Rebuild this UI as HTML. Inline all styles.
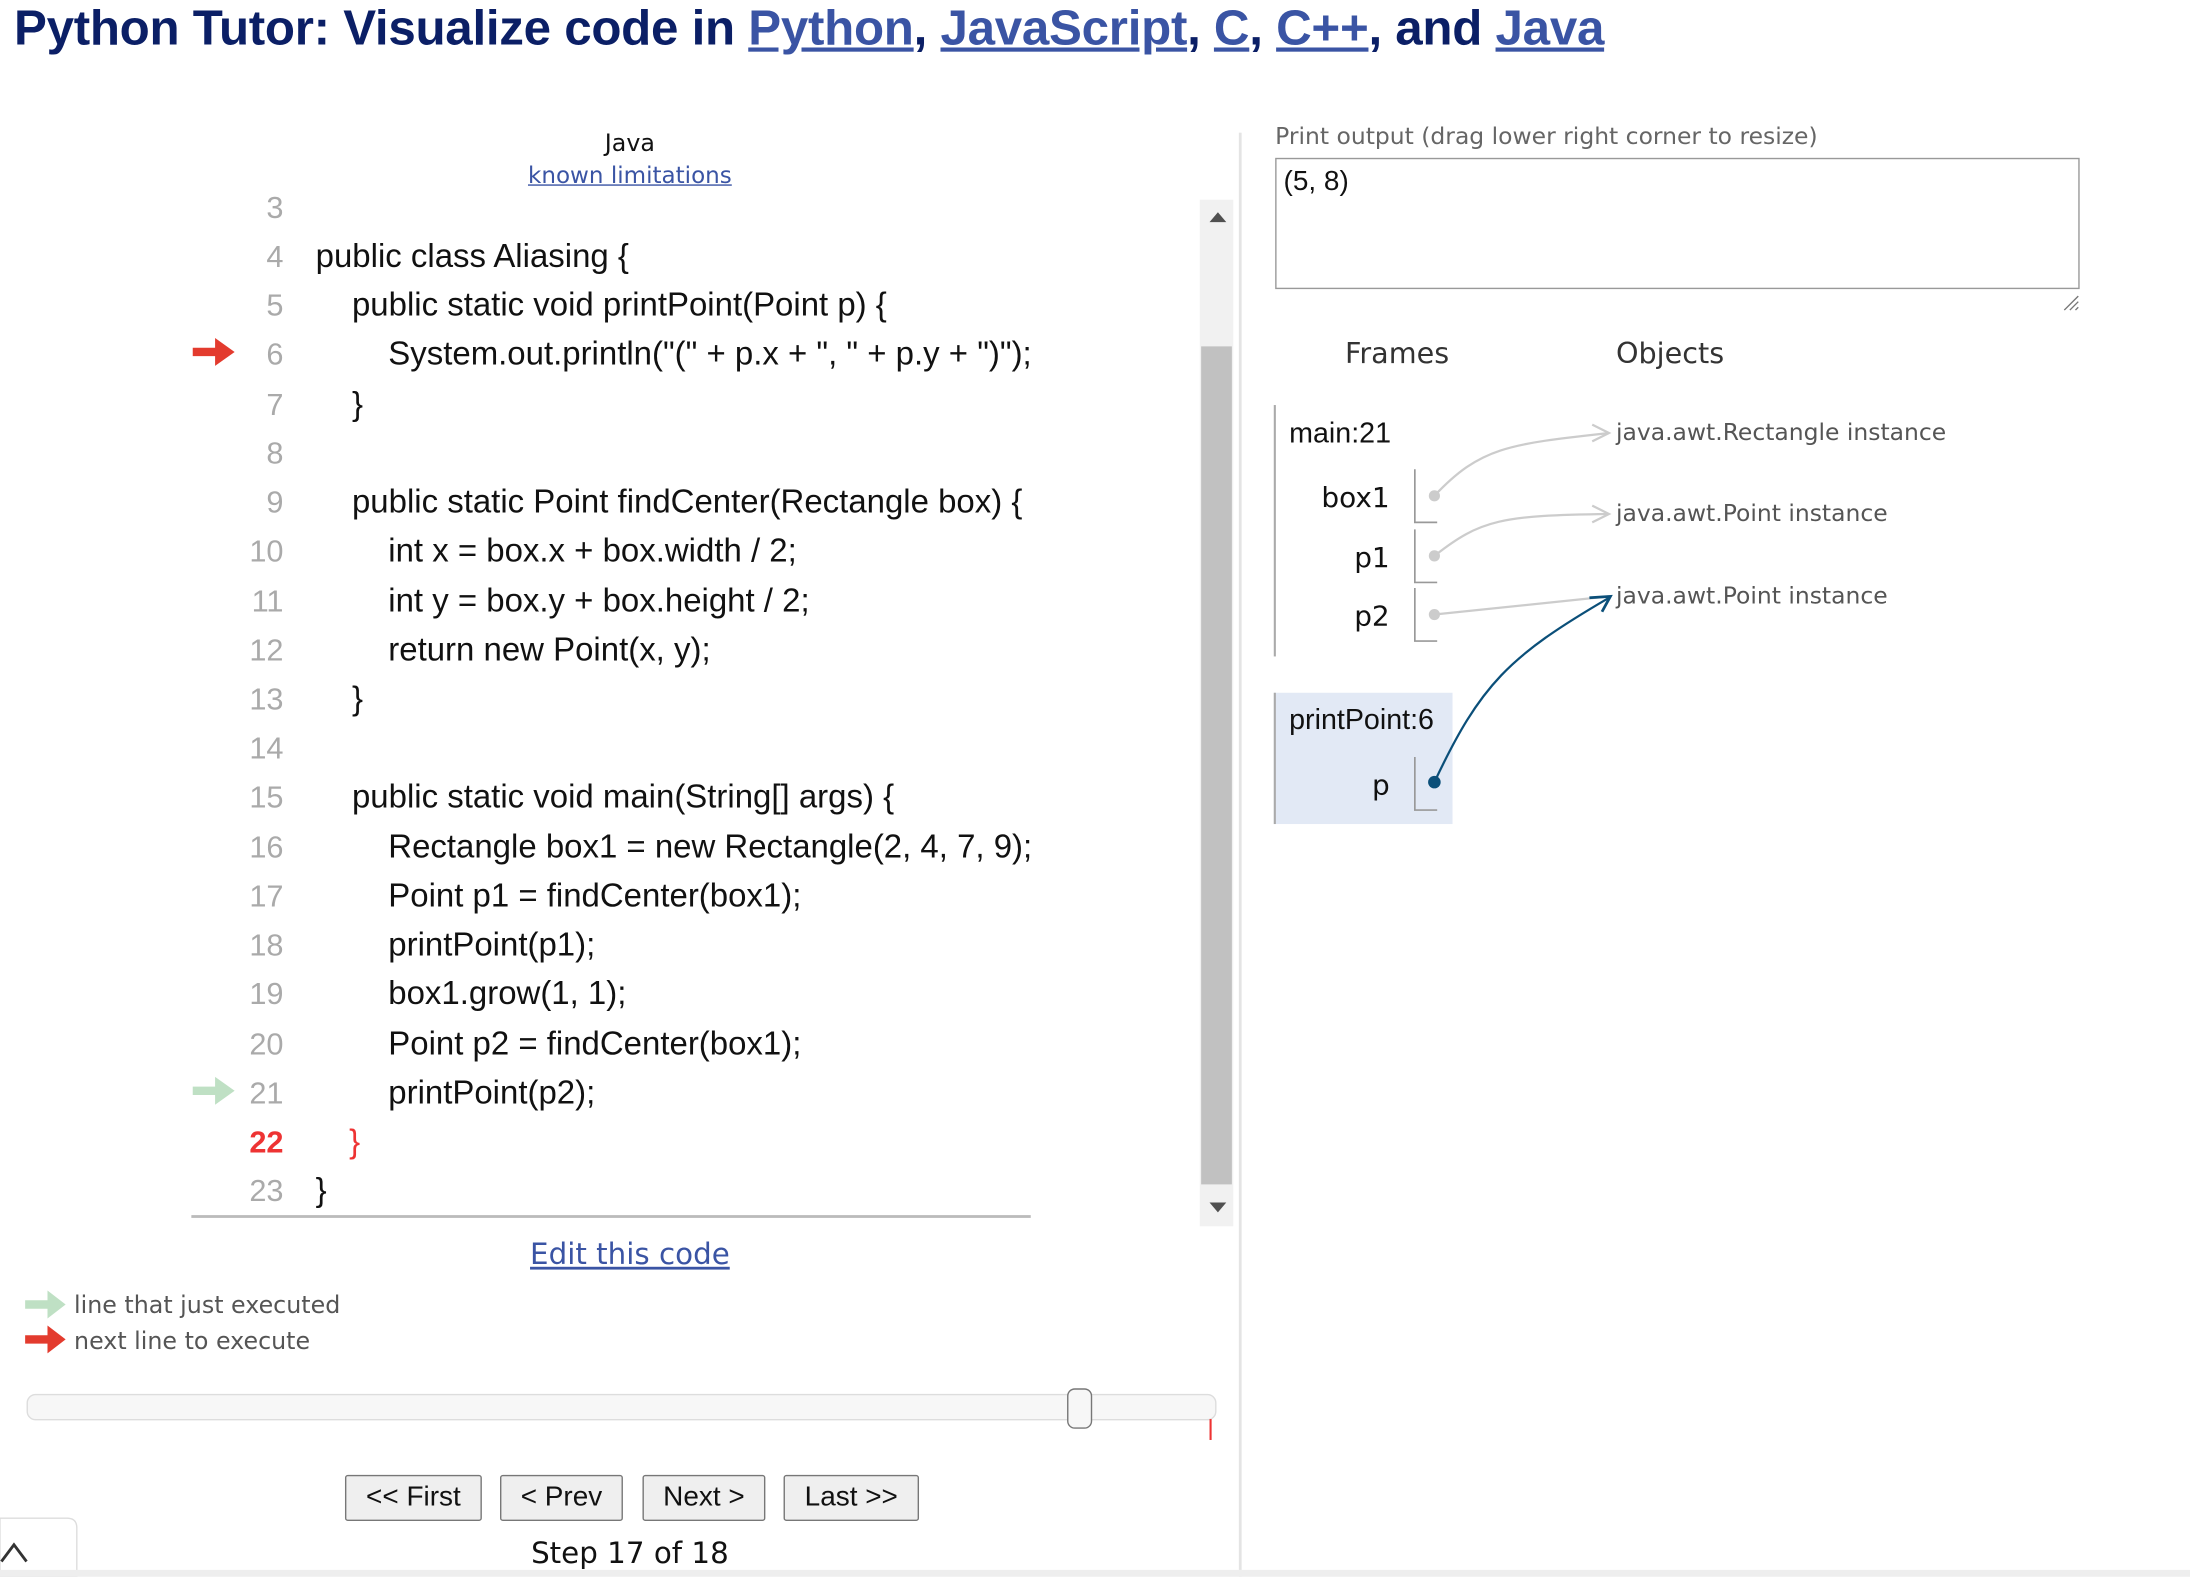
<!DOCTYPE html>
<html><head><meta charset="utf-8"><style>
html,body{margin:0;padding:0;background:#fff;overflow:hidden;width:2190px;height:1576px}
#w{position:absolute;left:0;top:0;width:1568px;height:1129px;transform:scale(1.39668);transform-origin:0 0;font-family:"Liberation Sans",Arial,sans-serif}
.a{position:absolute;white-space:pre}
.t{left:10px;top:1px;font-size:35.3px;font-weight:bold;color:#0b1f66;letter-spacing:-0.2px}
.t a{color:#3a54a4;text-decoration:underline}
.ln{position:absolute;width:60px;left:143px;text-align:right;font-size:22px;color:#aaa;line-height:26px}
.cd{position:absolute;font-size:23.6px;color:#111;line-height:26px;white-space:pre}
.v{font-family:"DejaVu Sans",Verdana,sans-serif}
.btn{position:absolute;top:1056px;height:31px;border:1px solid #777;border-radius:2px;background:#efefef;font-size:20px;line-height:31px;text-align:center;color:#111}
</style></head><body><div id="w">
<div class="a t">Python Tutor: Visualize code in <a>Python</a>, <a>JavaScript</a>, <a>C</a>, <a>C++</a>, and <a>Java</a></div>
<div class="a v" style="left:351px;width:200px;text-align:center;top:93px;font-size:17px;color:#111">Java</div>
<div class="a v" style="left:326px;width:250px;text-align:center;top:116px;font-size:16.5px;color:#3a54a4;text-decoration:underline">known limitations</div>

<div style="position:absolute;left:137px;top:140px;width:720px;height:730px;overflow:hidden">
<div style="position:relative;top:-139px;left:-137px">
<div class="ln" style="top:135px">3</div>
<div class="ln" style="top:170px">4</div><div class="cd" style="left:226px;top:170px">public class Aliasing {</div>
<div class="ln" style="top:205px">5</div><div class="cd" style="left:252px;top:205px">public static void printPoint(Point p) {</div>
<div class="ln" style="top:240px">6</div><div class="cd" style="left:278px;top:240px">System.out.println("(" + p.x + ", " + p.y + ")");</div>
<div class="ln" style="top:276px">7</div><div class="cd" style="left:252px;top:276px">}</div>
<div class="ln" style="top:311px">8</div>
<div class="ln" style="top:346px">9</div><div class="cd" style="left:252px;top:346px">public static Point findCenter(Rectangle box) {</div>
<div class="ln" style="top:381px">10</div><div class="cd" style="left:278px;top:381px">int x = box.x + box.width / 2;</div>
<div class="ln" style="top:417px">11</div><div class="cd" style="left:278px;top:417px">int y = box.y + box.height / 2;</div>
<div class="ln" style="top:452px">12</div><div class="cd" style="left:278px;top:452px">return new Point(x, y);</div>
<div class="ln" style="top:487px">13</div><div class="cd" style="left:252px;top:487px">}</div>
<div class="ln" style="top:522px">14</div>
<div class="ln" style="top:557px">15</div><div class="cd" style="left:252px;top:557px">public static void main(String[] args) {</div>
<div class="ln" style="top:593px">16</div><div class="cd" style="left:278px;top:593px">Rectangle box1 = new Rectangle(2, 4, 7, 9);</div>
<div class="ln" style="top:628px">17</div><div class="cd" style="left:278px;top:628px">Point p1 = findCenter(box1);</div>
<div class="ln" style="top:663px">18</div><div class="cd" style="left:278px;top:663px">printPoint(p1);</div>
<div class="ln" style="top:698px">19</div><div class="cd" style="left:278px;top:698px">box1.grow(1, 1);</div>
<div class="ln" style="top:734px">20</div><div class="cd" style="left:278px;top:734px">Point p2 = findCenter(box1);</div>
<div class="ln" style="top:769px">21</div><div class="cd" style="left:278px;top:769px">printPoint(p2);</div>
<div class="ln" style="top:804px;color:#e33;font-weight:bold">22</div><div class="cd" style="left:250px;top:804px;color:#e33">}</div>
<div class="ln" style="top:839px">23</div><div class="cd" style="left:226px;top:839px">}</div>
</div></div>
<svg class="a" style="left:0;top:0" width="1568" height="1129">
<path d="M138 249h16v-7l14 10-14 10v-7h-16z" fill="#e33b2e"/>
<path d="M138 778h16v-7l14 10-14 10v-7h-16z" fill="#bfe0c4"/>
<path d="M18 931h16v-7l13 10-13 10v-7h-16z" fill="#bfe0c4"/>
<path d="M18 956h16v-7l13 10-13 10v-7h-16z" fill="#e33b2e"/>
<rect x="137" y="870" width="601" height="2" fill="#bbb"/>
<rect x="859" y="143" width="24" height="735" fill="#f1f1f1"/>
<rect x="860" y="248" width="22" height="600" fill="#c1c1c1"/>
<path d="M866 159l6-7 6 7z" fill="#505050"/>
<path d="M866 861l6 7 6-7z" fill="#505050"/>
<rect x="887" y="95" width="2" height="1034" fill="#e4e4e4"/>
<rect x="19.5" y="998.5" width="851" height="18" rx="6" fill="#f7f7f7" stroke="#ddd"/>
<rect x="764.5" y="994.5" width="17" height="28" rx="5" fill="#f7f7f7" stroke="#777"/>
<rect x="866" y="1016" width="1.5" height="15" fill="#e33"/>
<path d="M0 1087h48q7 0 7 7v35H0z" fill="#fff" stroke="#ddd"/>
<path d="M1 1118l9-12 9 12" fill="none" stroke="#333" stroke-width="2"/>
<rect x="0" y="1124" width="1568" height="5" fill="#eee"/>
<rect x="913.5" y="113.5" width="575" height="93" fill="#fff" stroke="#999"/>
<path d="M1478 222l10-10M1482 222l6-6M1486 222l2-2" stroke="#777"/>
<rect x="912" y="290" width="1.5" height="180" fill="#aaa"/>
<rect x="912" y="496" width="128" height="94" fill="#e2e9f5"/>
<rect x="912" y="496" width="1.5" height="94" fill="#aaa"/>
<g fill="none" stroke="#999" stroke-width="1.2">
<path d="M1013 336v38h16M1013 379v38h16M1013 421v38h16M1013 542v38h16"/>
</g>
<g fill="none" stroke="#ccc" stroke-width="1.6">
<path d="M1027 355C1060 320 1080 318 1152 310"/>
<path d="M1027 398C1060 372 1075 369 1152 368"/>
<path d="M1027 440L1152 427"/>
<path d="M1140 304l12 6-12 6M1140 362l12 6-12 6"/>
</g>
<circle cx="1027" cy="355" r="4" fill="#ccc"/><circle cx="1027" cy="398" r="4" fill="#ccc"/><circle cx="1027" cy="440" r="4" fill="#ccc"/>
<path d="M1027 560C1060 490 1080 470 1152 428" fill="none" stroke="#0b4f79" stroke-width="1.6"/>
<path d="M1138 428l15 -1-6 11" fill="none" stroke="#0b4f79" stroke-width="2"/>
<circle cx="1027" cy="560" r="4.5" fill="#0b4f79"/>
</svg>
<div class="a v" style="left:301px;width:300px;text-align:center;top:886px;font-size:21px;color:#3a54a4;text-decoration:underline">Edit this code</div>
<div class="a v" style="left:53px;top:925px;font-size:17px;color:#555">line that just executed</div>
<div class="a v" style="left:53px;top:951px;font-size:17px;color:#555">next line to execute</div>
<div class="btn" style="left:247px;width:96px">&lt;&lt; First</div>
<div class="btn" style="left:358px;width:86px">&lt; Prev</div>
<div class="btn" style="left:460px;width:86px">Next &gt;</div>
<div class="btn" style="left:561px;width:95px">Last &gt;&gt;</div>
<div class="a v" style="left:301px;width:300px;text-align:center;top:1100px;font-size:21px;color:#111">Step 17 of 18</div>

<div class="a v" style="left:913px;top:87px;font-size:16.8px;color:#666">Print output (drag lower right corner to resize)</div>
<div class="a" style="left:919px;top:119px;font-size:20px;color:#111">(5, 8)</div>
<div class="a v" style="left:963px;top:241px;font-size:20.5px;color:#333">Frames</div>
<div class="a v" style="left:1157px;top:241px;font-size:20.5px;color:#333">Objects</div>
<div class="a" style="left:923px;top:299px;font-size:20.5px;color:#111">main:21</div>
<div class="a v" style="left:900px;width:95px;text-align:right;top:344px;font-size:20px;color:#111">box1</div>
<div class="a v" style="left:900px;width:95px;text-align:right;top:387px;font-size:20px;color:#111">p1</div>
<div class="a v" style="left:900px;width:95px;text-align:right;top:429px;font-size:20px;color:#111">p2</div>
<div class="a" style="left:923px;top:504px;font-size:20.5px;color:#111">printPoint:6</div>
<div class="a v" style="left:900px;width:95px;text-align:right;top:550px;font-size:20px;color:#111">p</div>
<div class="a v" style="left:1157px;top:299px;font-size:16.8px;color:#555">java.awt.Rectangle instance</div>
<div class="a v" style="left:1157px;top:357px;font-size:16.8px;color:#555">java.awt.Point instance</div>
<div class="a v" style="left:1157px;top:416px;font-size:16.8px;color:#555">java.awt.Point instance</div>
</div></body></html>
